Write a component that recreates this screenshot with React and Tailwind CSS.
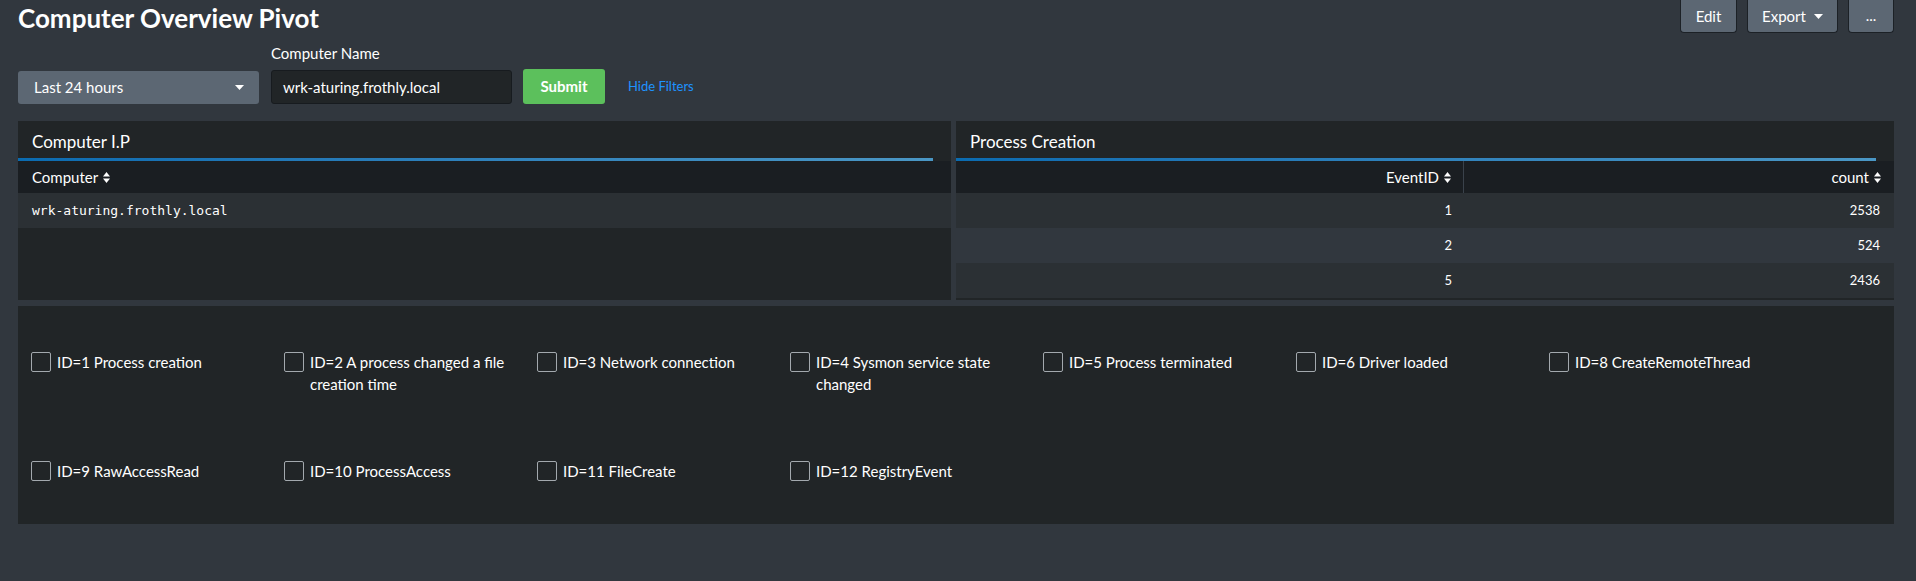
import React from "react";

const SortIcon = () => (
  <svg className="inline-block ml-[5px] w-[7px] h-[11px]" viewBox="0 0 7 11" fill="currentColor">
    <path d="M0 4.5L3.5 0L7 4.5Z" />
    <path d="M0 6.5L7 6.5L3.5 11Z" />
  </svg>
);

const Caret = () => (
  <svg className="w-[9px] h-[5px]" viewBox="0 0 9 5" fill="currentColor">
    <path d="M0 0H9L4.5 5Z" />
  </svg>
);

const events = [
  "ID=1 Process creation",
  "ID=2 A process changed a file creation time",
  "ID=3 Network connection",
  "ID=4 Sysmon service state changed",
  "ID=5 Process terminated",
  "ID=6 Driver loaded",
  "ID=8 CreateRemoteThread",
  "ID=9 RawAccessRead",
  "ID=10 ProcessAccess",
  "ID=11 FileCreate",
  "ID=12 RegistryEvent",
];

const processRows = [
  { id: 1, count: 2538 },
  { id: 2, count: 524 },
  { id: 5, count: 2436 },
];

function PanelTitle({ children }) {
  return (
    <>
      <div className="h-[37px] pl-[14px] pt-[4px] flex items-center text-[17px]">
        {children}
      </div>
      <div className="h-[3px] mr-[18px] bg-linear-to-r from-[#0a6bb0] to-[#4a97c5]"></div>
    </>
  );
}

export default function App() {
  return (
    <div className="min-h-[581px] bg-[#31373e] pl-[18px] pr-[22px] text-white font-['Lato','Open_Sans',sans-serif]">
      {/* Header */}
      <div className="flex justify-between h-[45px]">
        <h1 className="pt-[3px] text-[26px] leading-[30px] font-bold">
          Computer Overview Pivot
        </h1>
        <div className="flex items-start gap-[10px]">
          <button className="h-[33px] w-[57px] bg-[#5c6773] border border-[#1c2126] border-t-0 rounded-b-[4px] text-[15px]">
            Edit
          </button>
          <button className="h-[33px] w-[91px] bg-[#5c6773] border border-[#1c2126] border-t-0 rounded-b-[4px] text-[15px] flex items-center justify-center gap-[8px]">
            Export
            <Caret />
          </button>
          <button className="h-[33px] w-[46px] bg-[#5c6773] border border-[#1c2126] border-t-0 rounded-b-[4px] text-[15px] leading-none pb-[2px]">
            ...
          </button>
        </div>
      </div>

      {/* Filters */}
      <div className="flex items-end">
        <div className="w-[241px] h-[33px] bg-[#5c6773] rounded-[3px] flex items-center justify-between pl-[16px] pr-[15px] text-[15px]">
          <span>Last 24 hours</span>
          <Caret />
        </div>
        <div className="ml-[12px]">
          <div className="text-[15px] leading-[17px] mb-[8px]">Computer Name</div>
          <div className="w-[241px] h-[34px] bg-[#212527] border border-[#171b1f] rounded-[3px] flex items-center pl-[11px] text-[15px]">
            wrk-aturing.frothly.local
          </div>
        </div>
        <button className="ml-[11px] w-[82px] h-[35px] bg-[#5cc05c] rounded-[3px] text-[15px] font-bold">
          Submit
        </button>
        <a className="ml-[23px] mb-[8px] text-[13px] text-[#1e93ff]">Hide Filters</a>
      </div>

      {/* Tables */}
      <div className="mt-[17px] grid grid-cols-[933px_1fr] gap-[5px]">
        <div className="h-[179px] bg-[#212527]">
          <PanelTitle>Computer I.P</PanelTitle>
          <div className="h-[32px] bg-[#1a1e22] flex items-center pl-[14px] text-[15px]">
            Computer
            <SortIcon />
          </div>
          <div className="h-[35px] bg-[#2b3034] flex items-center pl-[14px] text-[13px] font-['DejaVu_Sans_Mono',monospace]">
            wrk-aturing.frothly.local
          </div>
        </div>

        <div className="h-[179px] bg-[#212527]">
          <PanelTitle>Process Creation</PanelTitle>
          <div className="grid grid-cols-[508px_1fr] h-[32px] bg-[#1a1e22] text-[15px]">
            <div className="flex items-center justify-end pr-[12px] border-r border-[#3a424b]">
              EventID
              <SortIcon />
            </div>
            <div className="flex items-center justify-end pr-[13px]">
              count
              <SortIcon />
            </div>
          </div>
          {processRows.map((row, i) => (
            <div
              key={row.id}
              className={
                "grid grid-cols-[508px_1fr] h-[35px] text-[13px] " +
                (i % 2 === 0 ? "bg-[#2b3034]" : "bg-[#31373e]")
              }
            >
              <div className="flex items-center justify-end pr-[12px]">{row.id}</div>
              <div className="flex items-center justify-end pr-[14px]">{row.count}</div>
            </div>
          ))}
        </div>
      </div>

      {/* Event checkboxes */}
      <div className="mt-[6px] bg-[#212527] pl-[13px] pt-[45px] pb-[42px] grid grid-cols-[repeat(7,253px)] gap-y-[65px]">
        {events.map((label) => (
          <label key={label} className="flex items-start gap-[6px]">
            <span className="mt-[1px] w-[20px] h-[20px] shrink-0 border border-[#a3a9ae] rounded-[2px]"></span>
            <span className="w-[222px] text-[15px] leading-[22px]">{label}</span>
          </label>
        ))}
      </div>
    </div>
  );
}
